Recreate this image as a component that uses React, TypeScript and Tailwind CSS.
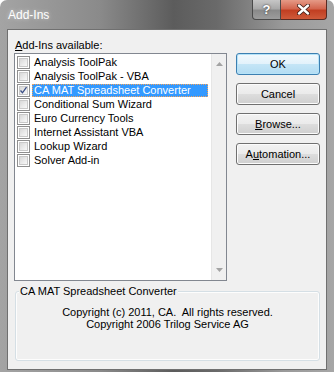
import React from 'react';

const ITEMS = [
  { label: 'Analysis ToolPak', checked: false },
  { label: 'Analysis ToolPak - VBA', checked: false },
  { label: 'CA MAT Spreadsheet Converter', checked: true, selected: true },
  { label: 'Conditional Sum Wizard', checked: false },
  { label: 'Euro Currency Tools', checked: false },
  { label: 'Internet Assistant VBA', checked: false },
  { label: 'Lookup Wizard', checked: false },
  { label: 'Solver Add-in', checked: false },
];

function CheckBox({ checked }: { checked: boolean }) {
  return (
    <div className="w-[13px] h-[13px] shrink-0 border border-[#8f8f8f] bg-white p-[1px]">
      <div className="relative w-full h-full border border-[#c9c9c9] bg-[linear-gradient(135deg,#d8d8d8_0%,#ececec_60%,#f8f8f8_100%)]">
        {checked && (
          <svg className="absolute -left-[1px] -top-[1px]" width="9" height="9" viewBox="0 0 9 9">
            <path d="M1.5 4.5 L3.5 6.8 L7.5 1.2" fill="none" stroke="#3b4f86" strokeWidth="1.3" />
          </svg>
        )}
      </div>
    </div>
  );
}

function DlgButton({ children, primary }: { children: React.ReactNode; primary?: boolean }) {
  return (
    <div
      className={
        'h-[22px] w-[84px] rounded-[3px] border flex items-center justify-center text-[11px] text-black ' +
        (primary
          ? 'border-[#3c7fb1] shadow-[inset_0_0_0_1px_#b6e3f8] bg-[linear-gradient(180deg,#f2f9fd_0%,#e3f2fb_48%,#c4e5f6_52%,#b2dcf3_100%)]'
          : 'border-[#707070] shadow-[inset_0_0_0_1px_#fcfcfc] bg-[linear-gradient(180deg,#f2f2f2_0%,#ebebeb_48%,#dddddd_52%,#cfcfcf_100%)]')
      }
    >
      {children}
    </div>
  );
}

export default function App() {
  return (
    <div
      className="w-[334px] h-[372px] overflow-hidden rounded-t-[7px] bg-[linear-gradient(90deg,#a4a4a4_0%,#8a8a8a_30%,#5c5c5c_52%,#6a6a6a_65%,#9a9a9a_85%,#a6a6a6_100%)]"
      style={{ fontFamily: '"Liberation Sans", Arial, sans-serif' }}
    >
      {/* Title bar */}
      <div className="flex h-[29px] items-start">
        <div className="pl-[8px] pt-[8px] text-[12px] leading-[14px] text-white [text-shadow:0_0_4px_rgba(255,255,255,0.6)]">
          Add-Ins
        </div>
        <div className="ml-auto mr-[7px] flex">
          <div className="w-[29px] h-[20px] rounded-bl-[4px] border border-t-0 border-[#4a4a4a] bg-[linear-gradient(180deg,#c6c6c6_0%,#a9a9a9_45%,#8a8a8a_55%,#9c9c9c_100%)] flex items-center justify-center text-[13px] font-bold text-white [text-shadow:0_0_2px_#222]">
            ?
          </div>
          <div className="w-[46px] h-[20px] rounded-br-[4px] border border-t-0 border-l-0 border-[#5a2a22] bg-[linear-gradient(180deg,#e59a87_0%,#d3664f_45%,#c13f22_55%,#cf5a3a_100%)] flex items-center justify-center">
            <svg width="13" height="11" viewBox="0 0 13 11">
              <path d="M2 1.5 L11 9.5 M11 1.5 L2 9.5" stroke="#3a1a14" strokeWidth="4" strokeLinecap="round" />
              <path d="M2 1.5 L11 9.5 M11 1.5 L2 9.5" stroke="#ffffff" strokeWidth="2.4" strokeLinecap="round" />
            </svg>
          </div>
        </div>
      </div>

      {/* Client area */}
      <div className="mx-[7px] h-[341px] border border-[#707070] bg-[#f0f0f0] pl-[6px] pt-[7px] text-[11px] text-black">
        <div className="flex gap-[9px]">
          <div className="w-[213px]">
            <div className="h-[16px] leading-[16px] pl-[1px]">
              <span className="underline">A</span>dd-Ins available:
            </div>
            <div className="h-[228px] border border-[#828790] bg-white flex">
              <div className="flex-1 pt-[1px] pl-[2px]">
                {ITEMS.map((item) => (
                  <div key={item.label} className="h-[14px] flex items-center">
                    <CheckBox checked={item.checked} />
                    <div
                      className={
                        'ml-[2px] mr-[3px] flex-1 h-[13px] leading-[11px] pl-[1px] ' +
                        (item.selected
                          ? 'bg-[#3399ff] text-white border border-dotted border-[#f3a35c]'
                          : 'border border-transparent')
                      }
                    >
                      {item.label}
                    </div>
                  </div>
                ))}
              </div>
              <div className="w-[15px] border-l border-[#e6e6e6] bg-[#f0f0f0] flex flex-col items-center justify-between py-[8px]">
                <svg width="7" height="4" viewBox="0 0 7 4">
                  <path d="M0 4 L3.5 0 L7 4 Z" fill="#a3a3a3" />
                </svg>
                <svg width="7" height="4" viewBox="0 0 7 4">
                  <path d="M0 0 L7 0 L3.5 4 Z" fill="#a3a3a3" />
                </svg>
              </div>
            </div>
          </div>
          <div className="pt-[16px] flex flex-col gap-[8px]">
            <DlgButton primary>OK</DlgButton>
            <DlgButton>Cancel</DlgButton>
            <DlgButton>
              <span className="underline">B</span>rowse...
            </DlgButton>
            <DlgButton>
              A<span className="underline">u</span>tomation...
            </DlgButton>
          </div>
        </div>

        {/* Group box */}
        <div className="relative mt-[10px] ml-[1px] w-[305px] h-[70px] rounded-[3px] border border-[#d5dfe5] shadow-[inset_0_0_0_1px_#fdfdfd] pt-[14px] text-center leading-[12px]">
          <div className="absolute -top-[8px] left-[3px] px-[1px] bg-[#f0f0f0] leading-[14px]">
            CA MAT Spreadsheet Converter
          </div>
          <div className="whitespace-pre">Copyright (c) 2011, CA.  All rights reserved.</div>
          <div>Copyright 2006 Trilog Service AG</div>
        </div>
      </div>
    </div>
  );
}
